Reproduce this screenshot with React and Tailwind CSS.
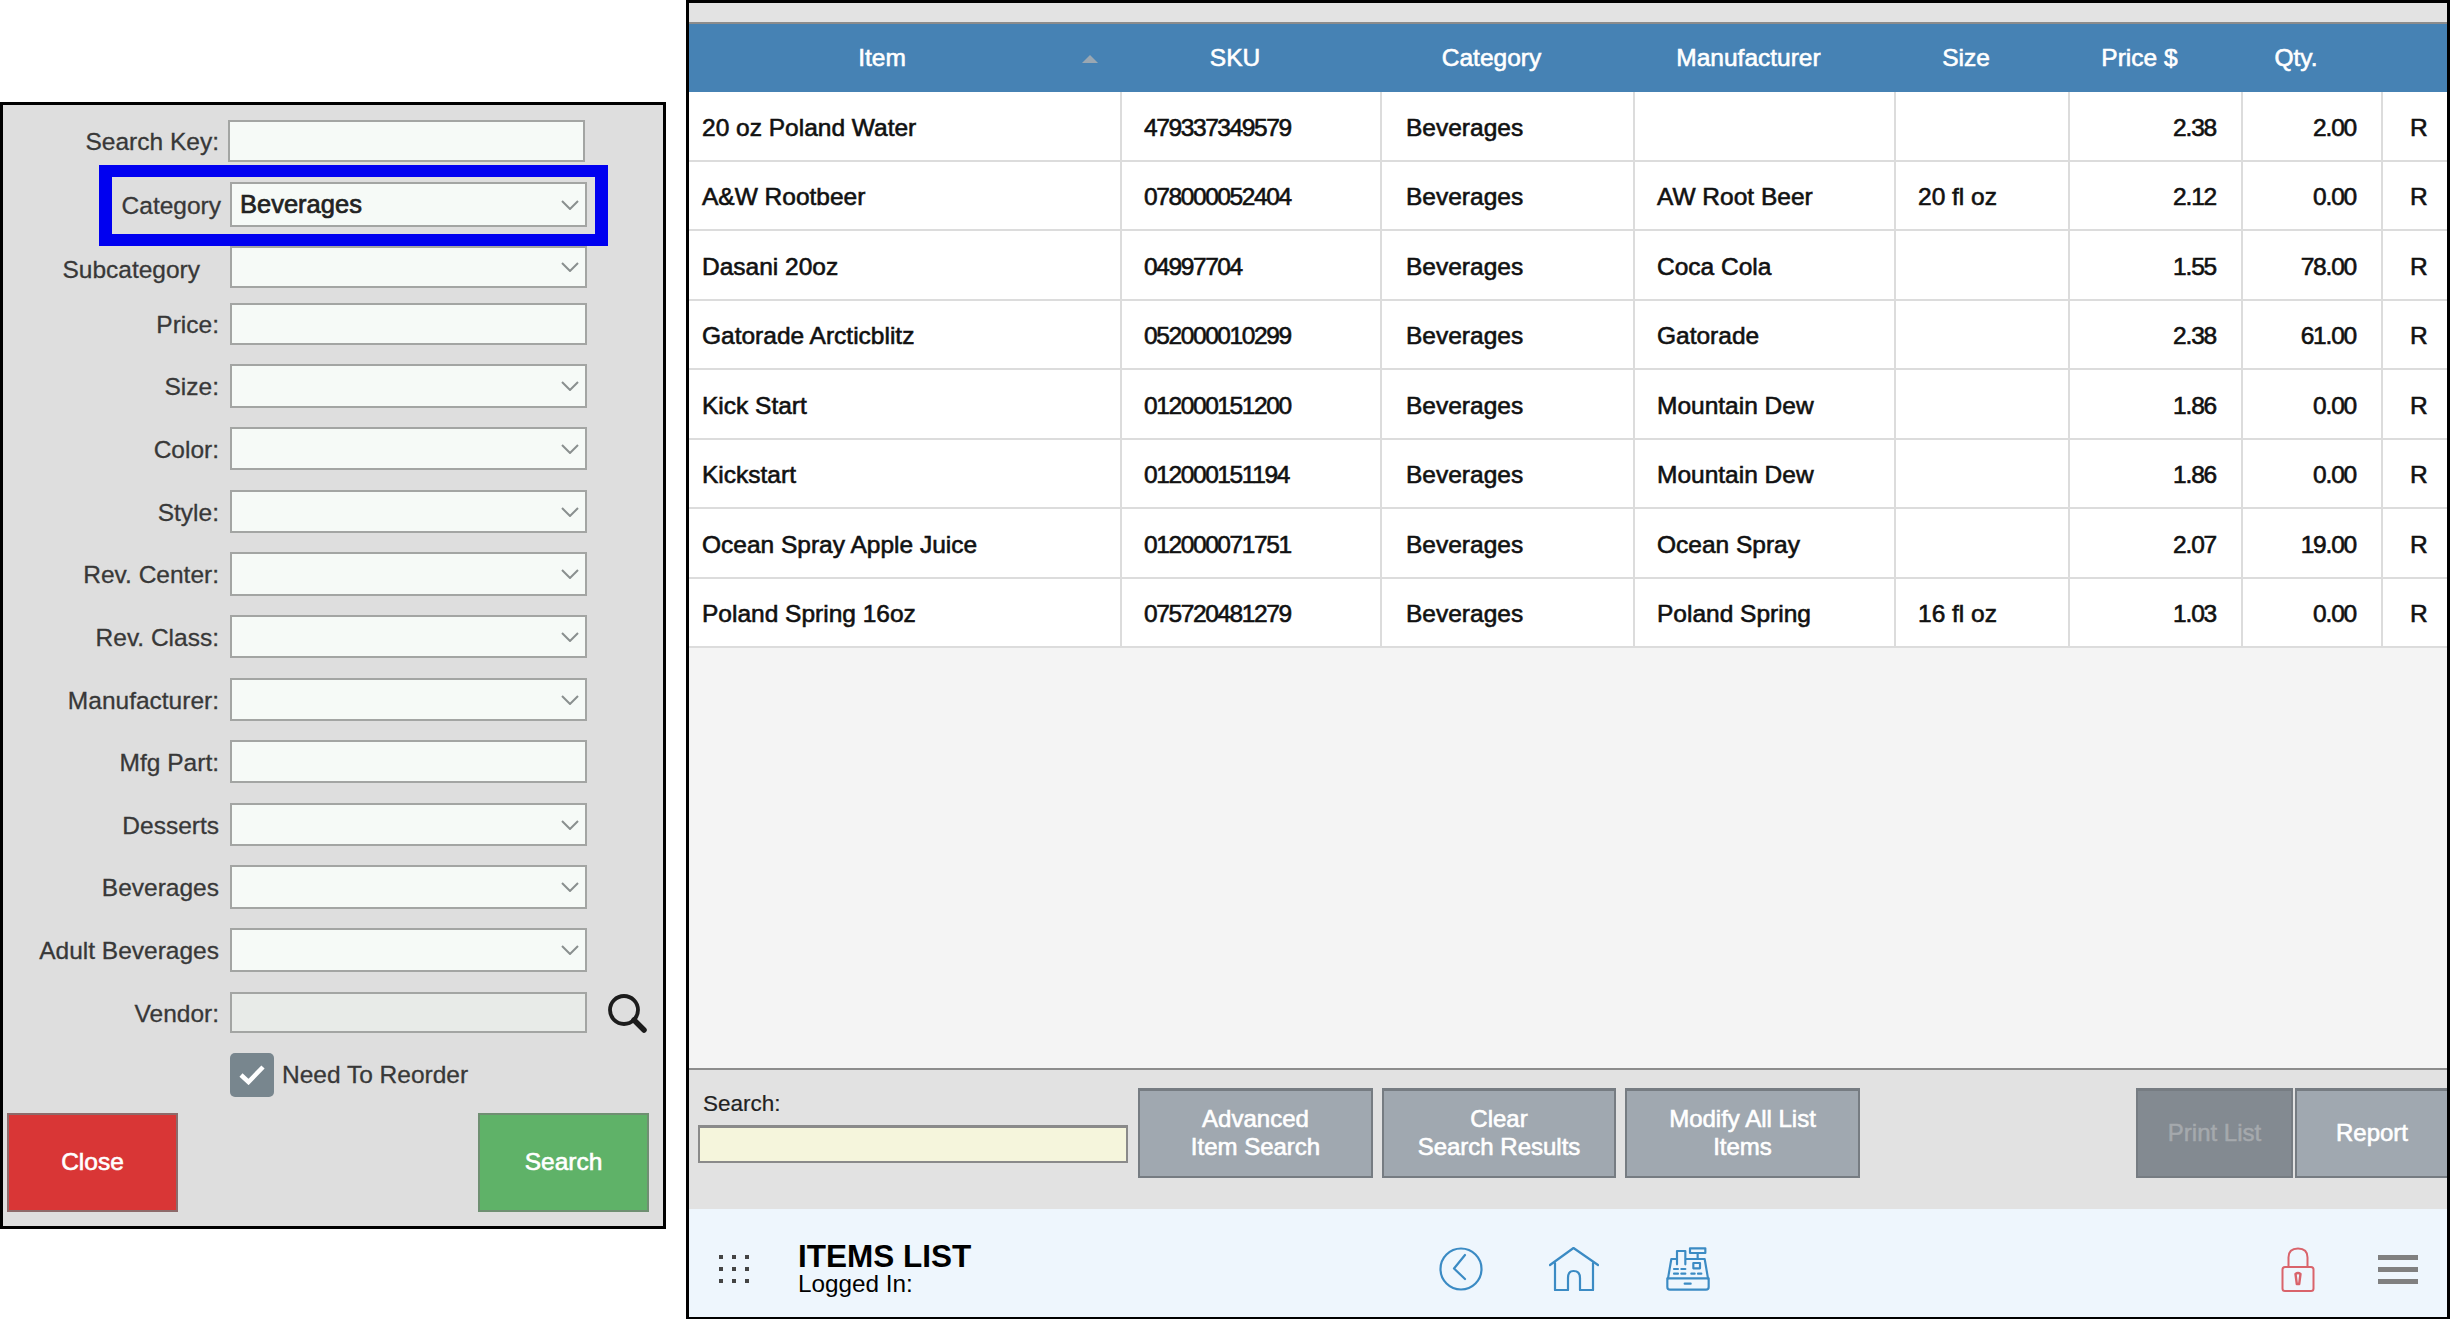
const SANS = "font-['Liberation_Sans',Arial,sans-serif]";

const Chevron = () => (
  <svg width="18" height="10" viewBox="0 0 18 10" className="absolute right-[6px] top-1/2 -translate-y-1/2" fill="none" stroke="#8a8f8f" strokeWidth="2">
    <path d="M1 1 L9 9 L17 1" />
  </svg>
);

const Field = ({ select, className = "", children }) => (
  <div className={`relative flex items-center h-full w-[357px] border-2 border-[#a3a5a3] pl-[8px] ${className}`}>
    {children}
    {select && <Chevron />}
  </div>
);

const formRows = [
  { label: "Search Key:", box: "mt-[15px] h-[42px]", end: "w-[219px]", gap: "ml-[9px]", bg: "bg-[#f6faf7]" },
  { label: "Category", box: "mt-[20px] h-[45px]", end: "w-[221px]", gap: "ml-[9px]", bg: "bg-[#f6faf7]", select: true, value: "Beverages" },
  { label: "Subcategory", box: "mt-[19px] h-[42px]", end: "w-[200px]", gap: "ml-[30px]", bg: "bg-[#f6faf7]", select: true, labelCls: "pt-[6px]" },
  { label: "Price:", box: "mt-[15px] h-[42px]", end: "w-[219px]", gap: "ml-[11px]", bg: "bg-[#f6faf7]" },
  { label: "Size:", box: "mt-[19px] h-[44px]", end: "w-[219px]", gap: "ml-[11px]", bg: "bg-[#f6faf7]", select: true },
  { label: "Color:", box: "mt-[19px] h-[43px]", end: "w-[219px]", gap: "ml-[11px]", bg: "bg-[#f6faf7]", select: true },
  { label: "Style:", box: "mt-[20px] h-[43px]", end: "w-[219px]", gap: "ml-[11px]", bg: "bg-[#f6faf7]", select: true },
  { label: "Rev. Center:", box: "mt-[19px] h-[44px]", end: "w-[219px]", gap: "ml-[11px]", bg: "bg-[#f6faf7]", select: true },
  { label: "Rev. Class:", box: "mt-[19px] h-[43px]", end: "w-[219px]", gap: "ml-[11px]", bg: "bg-[#f6faf7]", select: true },
  { label: "Manufacturer:", box: "mt-[20px] h-[43px]", end: "w-[219px]", gap: "ml-[11px]", bg: "bg-[#f6faf7]", select: true },
  { label: "Mfg Part:", box: "mt-[19px] h-[43px]", end: "w-[219px]", gap: "ml-[11px]", bg: "bg-[#f6faf7]" },
  { label: "Desserts", box: "mt-[20px] h-[43px]", end: "w-[219px]", gap: "ml-[11px]", bg: "bg-[#f6faf7]", select: true },
  { label: "Beverages", box: "mt-[19px] h-[44px]", end: "w-[219px]", gap: "ml-[11px]", bg: "bg-[#f6faf7]", select: true },
  { label: "Adult Beverages", box: "mt-[19px] h-[44px]", end: "w-[219px]", gap: "ml-[11px]", bg: "bg-[#f6faf7]", select: true },
  { label: "Vendor:", box: "mt-[20px] h-[41px]", end: "w-[219px]", gap: "ml-[11px]", bg: "bg-[#e8ebe8]", magnify: true },
];

const Magnifier = () => (
  <svg width="40" height="40" viewBox="0 0 40 40" className="ml-[20px] shrink-0" fill="none" stroke="#1c1c1c">
    <circle cx="17" cy="17" r="14" strokeWidth="3.8" />
    <path d="M27 27 L37 37" strokeWidth="5.5" strokeLinecap="round" />
  </svg>
);

const FilterPanel = () => (
  <div className="relative w-[666px] h-[1127px] border-[3px] border-black bg-[#dedede] text-[24.5px] text-[#383838] [-webkit-text-stroke:0.3px_#383838] flex flex-col">
    {formRows.map((r) => (
      <div key={r.label} className={`flex items-center shrink-0 ${r.box}`}>
        <div className={`${r.end} -ml-[3px] text-right whitespace-nowrap ${r.labelCls || "pt-[3px]"}`}>{r.label}</div>
        <div className={`${r.gap} h-full`}>
          <Field select={r.select} className={r.bg}>
            {r.value && <span className="text-[25.5px] text-[#222] [-webkit-text-stroke:0.7px_#222]">{r.value}</span>}
          </Field>
        </div>
        {r.magnify && <Magnifier />}
      </div>
    ))}
    <div className="flex items-center h-[44px] mt-[20px] ml-[227px] shrink-0">
      <div className="w-[44px] h-[44px] rounded-[5px] bg-[#78868e] flex items-center justify-center">
        <svg width="26" height="20" viewBox="0 0 26 20" fill="none" stroke="#fff" strokeWidth="4.5">
          <path d="M2 10 L9.5 17 L24 2" />
        </svg>
      </div>
      <span className="ml-[8px]">Need To Reorder</span>
    </div>
    <div className="flex justify-between mt-[16px] ml-[4px] mr-[14px] h-[99px] shrink-0 text-[24.5px] text-white [-webkit-text-stroke:0.6px_#fff]">
      <div className="w-[171px] border-2 border-[#8d6a6a] bg-[#d93636] flex items-center justify-center">Close</div>
      <div className="w-[171px] border-2 border-[#6f8f72] bg-[#5fb268] flex items-center justify-center">Search</div>
    </div>
    <div className="absolute left-[96px] top-[60px] w-[509px] h-[81px] border-x-[13px] border-y-[12px] border-[#0000f0]" />
  </div>
);

const GRID = "grid grid-cols-[433px_260px_253px_261px_174px_173px_140px_64px]";

const rows = [
  ["20 oz Poland Water", "479337349579", "Beverages", "", "", "2.38", "2.00"],
  ["A&W Rootbeer", "078000052404", "Beverages", "AW Root Beer", "20 fl oz", "2.12", "0.00"],
  ["Dasani 20oz", "04997704", "Beverages", "Coca Cola", "", "1.55", "78.00"],
  ["Gatorade Arcticblitz", "052000010299", "Beverages", "Gatorade", "", "2.38", "61.00"],
  ["Kick Start", "012000151200", "Beverages", "Mountain Dew", "", "1.86", "0.00"],
  ["Kickstart", "012000151194", "Beverages", "Mountain Dew", "", "1.86", "0.00"],
  ["Ocean Spray Apple Juice", "012000071751", "Beverages", "Ocean Spray", "", "2.07", "19.00"],
  ["Poland Spring 16oz", "075720481279", "Beverages", "Poland Spring", "16 fl oz", "1.03", "0.00"],
];

const headers = ["Item", "SKU", "Category", "Manufacturer", "Size", "Price $", "Qty.", ""];

const Cell = ({ className = "", children }) => (
  <div className={`flex items-center pt-[5px] border-r-2 border-[#dcdcdc] whitespace-nowrap ${className}`}>{children}</div>
);

const ItemRow = ({ r }) => (
  <div className={`${GRID} h-[69.5px] bg-white border-b-2 border-[#dcdcdc] shrink-0`}>
    <Cell className="pl-[13px]">{r[0]}</Cell>
    <Cell className="pl-[22px] tracking-[-1.4px]">{r[1]}</Cell>
    <Cell className="pl-[24px]">{r[2]}</Cell>
    <Cell className="pl-[22px]">{r[3]}</Cell>
    <Cell className="pl-[22px]">{r[4]}</Cell>
    <Cell className="justify-end pr-[25px] tracking-[-1.2px]">{r[5]}</Cell>
    <Cell className="justify-end pr-[25px] tracking-[-1.2px]">{r[6]}</Cell>
    <div className="flex items-center pt-[5px] pl-[27px]">R</div>
  </div>
);

const GrayButton = ({ className = "bg-[#a0a8b0] text-white [-webkit-text-stroke:0.6px_#fff]", extra = "", children }) => (
  <div className={`h-[90px] pb-[2px] border-2 border-t-[3px] border-[#767c82] text-[24px] leading-[28px] text-center flex items-center justify-center ${className} ${extra}`}>
    <div>{children}</div>
  </div>
);

const BackIcon = () => (
  <svg width="44" height="44" viewBox="0 0 44 44" fill="none" stroke="#3b8bc4" strokeWidth="2.2" className="shrink-0">
    <circle cx="22" cy="22" r="20.5" />
    <path d="M26 8 L15 21.5 L26 32" strokeLinecap="round" strokeLinejoin="round" />
  </svg>
);

const HomeIcon = () => (
  <svg width="50" height="44" viewBox="0 0 50 44" fill="none" stroke="#3b8bc4" strokeWidth="2.2" strokeLinecap="round" strokeLinejoin="round" className="shrink-0">
    <path d="M1 18 L24.5 1 L49 18" />
    <path d="M6 16 V43 H19 V31 Q19 24 24.5 24 Q31 24 31 31 V43 H44 V16" />
  </svg>
);

const RegisterIcon = () => (
  <svg width="44" height="44" viewBox="0 0 132 132" fill="none" stroke="#3b8bc4" strokeWidth="6.5" strokeLinejoin="round" strokeLinecap="round" className="shrink-0">
    <path d="M4 94 H128 V120 Q128 128 120 128 H12 Q4 128 4 120 Z" />
    <path d="M6 94 L16 36 H32 M60 36 H116 L126 94" />
    <path d="M33 52 V12 H58 V52" />
    <path d="M72 4 H118 V18 H72 Z" />
    <path d="M95 18 V36" />
    <path d="M82 48 H102 V64 H82 Z" />
    <path d="M24 66 H36 M46 66 H58 M24 80 H36 M46 80 H58 M76 80 H86 M96 80 H106" />
    <path d="M56 110 H74" />
  </svg>
);

const LockIcon = () => (
  <svg width="34" height="45" viewBox="0 0 34 45" fill="none" stroke="#d9636b" strokeWidth="2" className="shrink-0">
    <rect x="1.5" y="20" width="31" height="24" rx="2.5" />
    <path d="M7.5 20 V10.5 Q7.5 1.5 17 1.5 Q26.5 1.5 26.5 10.5 V20" />
    <path d="M14.5 27 Q17 25 19.5 27 L18.2 37 H15.8 Z" strokeWidth="2.4" strokeLinejoin="round" />
  </svg>
);

const Dots = () => (
  <div className="grid grid-cols-3 gap-x-[9px] gap-y-[8px] shrink-0">
    {Array.from({ length: 9 }).map((_, i) => (
      <div key={i} className="w-[4px] h-[4px] bg-[#444]" />
    ))}
  </div>
);

const ItemsPanel = () => (
  <div className="w-[1764px] h-[1319px] border-l-[3px] border-r-[3px] border-t-[3px] border-b-2 border-black flex flex-col text-[24.5px] text-[#111] [-webkit-text-stroke:0.6px_#111]">
    <div className="h-[21px] bg-[#e3e3e3] border-b-2 border-[#8c8c8c] shrink-0" />
    <div className={`${GRID} h-[68px] bg-[#4682b4] text-white shrink-0 [-webkit-text-stroke:0.6px_#fff]`}>
      {headers.map((h, i) => (
        <div key={i} className={`relative flex items-center justify-center ${i === 0 ? "pr-[47px]" : "pr-[34px]"}`}>
          {h}
          {i === 0 && (
            <svg width="16" height="8" viewBox="0 0 16 8" className="absolute right-[24px] top-[31px]">
              <polygon points="8,0 16,8 0,8" fill="#9aa7b2" stroke="none" />
            </svg>
          )}
        </div>
      ))}
    </div>
    {rows.map((r) => (
      <ItemRow key={r[0]} r={r} />
    ))}
    <div className="flex-1 bg-[#f4f4f4]" />
    <div className="h-[141px] shrink-0 border-t-2 border-[#8c8c8c] bg-[#e2e2e2] flex items-start pt-[18px] [-webkit-text-stroke:0.2px_#222]">
      <div className="ml-[9px] w-[430px] shrink-0">
        <div className="ml-[5px] text-[22.5px] text-[#222] leading-[30px] mt-[1px]">Search:</div>
        <div className="h-[38px] mt-[6px] border-2 border-t-[3px] border-[#8a8a8a] bg-[#f5f5dc]" />
      </div>
      <GrayButton extra="ml-[10px] w-[235px]">Advanced<br />Item Search</GrayButton>
      <GrayButton extra="ml-[9px] w-[234px]">Clear<br />Search Results</GrayButton>
      <GrayButton extra="ml-[9px] w-[235px]">Modify All List<br />Items</GrayButton>
      <GrayButton className="bg-[#838a91] text-[#a5a9ad] [-webkit-text-stroke:0.5px_#a5a9ad]" extra="ml-auto w-[157px]">Print List</GrayButton>
      <GrayButton extra="ml-[2px] w-[152px] border-r-0">Report</GrayButton>
    </div>
    <div className="flex-none h-[108px] bg-[#eef6fd] flex items-center pt-[12px] [-webkit-text-stroke:0px]">
      <div className="ml-[30px]"><Dots /></div>
      <div className="ml-[49px] w-[641px] shrink-0 text-black">
        <div className="text-[31.5px] leading-[30px] font-bold">ITEMS LIST</div>
        <div className="text-[24.3px] leading-[26px] mt-0">Logged In:</div>
      </div>
      <BackIcon />
      <div className="ml-[66px]"><HomeIcon /></div>
      <div className="ml-[67px]"><RegisterIcon /></div>
      <div className="ml-[571px]"><LockIcon /></div>
      <div className="ml-[63px] flex flex-col gap-[7px] w-[40px] shrink-0">
        <div className="h-[5px] bg-[#808080]" />
        <div className="h-[5px] bg-[#808080]" />
        <div className="h-[5px] bg-[#808080]" />
      </div>
    </div>
  </div>
);

export default function App() {
  return (
    <div className={`w-[2450px] h-[1322px] bg-white flex items-start overflow-hidden ${SANS}`}>
      <div className="pt-[102px] w-[686px] shrink-0">
        <FilterPanel />
      </div>
      <ItemsPanel />
    </div>
  );
}
